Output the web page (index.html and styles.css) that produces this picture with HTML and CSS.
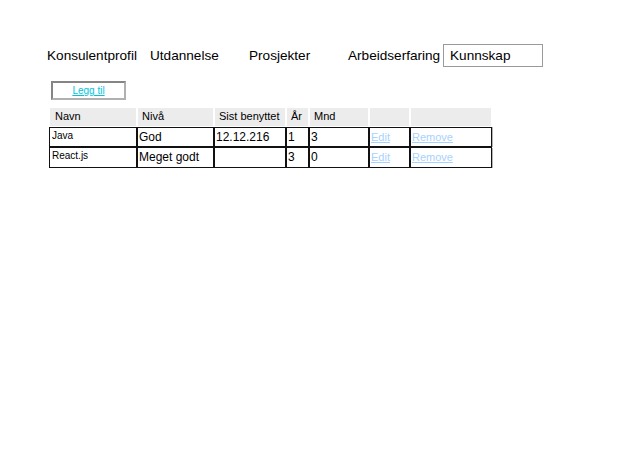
FILE: index.html
```html
<!DOCTYPE html>
<html lang="no">
<head>
<meta charset="utf-8">
<title>Kunnskap</title>
<link rel="stylesheet" href="styles.css">
</head>
<body>
<nav class="tabs">
  <span class="tab tab-1">Konsulentprofil</span>
  <span class="tab tab-2">Utdannelse</span>
  <span class="tab tab-3">Prosjekter</span>
  <span class="tab tab-4">Arbeidserfaring</span>
  <span class="tab tab-active">Kunnskap</span>
</nav>
<div class="actions">
  <a class="add-btn" href="#">Legg til</a>
</div>
<table class="grid">
  <thead>
    <tr>
      <th class="c-name">Navn</th>
      <th class="c-level">Nivå</th>
      <th class="c-date">Sist benyttet</th>
      <th class="c-year">År</th>
      <th class="c-month">Mnd</th>
      <th class="c-edit"></th>
      <th class="c-remove"></th>
    </tr>
  </thead>
  <tbody>
    <tr>
      <td class="name">Java</td>
      <td>God</td>
      <td>12.12.216</td>
      <td>1</td>
      <td>3</td>
      <td><a class="link" href="#">Edit</a></td>
      <td><a class="link" href="#">Remove</a></td>
    </tr>
    <tr class="last">
      <td class="name">React.js</td>
      <td>Meget godt</td>
      <td></td>
      <td>3</td>
      <td>0</td>
      <td><a class="link" href="#">Edit</a></td>
      <td><a class="link" href="#">Remove</a></td>
    </tr>
  </tbody>
</table>
</body>
</html>
```

FILE: styles.css
```css
html, body {
  margin: 0;
  padding: 0;
  background: #fff;
}

body {
  font-family: "Liberation Sans", Arial, sans-serif;
  color: #000;
}

.tabs {
  display: flex;
  align-items: center;
  padding: 44px 0 0 47px;
  font-size: 13.6px;
}

.tab {
  display: block;
  line-height: 21px;
  white-space: nowrap;
}

.tab-1 { width: 103px; }
.tab-2 { width: 99px; }
.tab-3 { width: 99px; }
.tab-4 { width: 95px; }

.tab-active {
  box-sizing: border-box;
  width: 100px;
  height: 23px;
  border: 1px solid #9a9a9a;
  padding-left: 6px;
}

.actions {
  padding: 14px 0 0 51px;
}

.add-btn {
  display: block;
  box-sizing: border-box;
  width: 75px;
  height: 19px;
  border: 2px solid #8c8c8c;
  border-color: #858585 #b0b0b0 #b0b0b0 #858585;
  text-align: center;
  font-size: 10px;
  line-height: 15px;
  color: #00c3dc;
  text-decoration: underline;
}

.grid {
  margin: 7px 0 0 49px;
  border-collapse: separate;
  border-spacing: 0;
  table-layout: fixed;
}

.grid th,
.grid td {
  box-sizing: border-box;
  padding: 0;
  text-align: left;
  vertical-align: top;
}

.grid th {
  height: 20px;
  border: 1px solid #fff;
  background: #ececec;
  font-weight: normal;
  font-size: 11px;
  line-height: 16px;
  padding-left: 4px;
}

.grid th.c-name { padding-left: 5px; }

.c-name { width: 88px; }
.c-level { width: 77px; }
.c-date { width: 72px; }
.c-year { width: 23px; }
.c-month { width: 60px; }
.c-edit { width: 41px; }
.c-remove { width: 82px; }

.grid td {
  height: 20px;
  border: 1px solid #111;
  font-size: 12px;
  line-height: 16px;
  padding: 1px 0 0 1px;
}

.grid td.name {
  font-size: 10px;
  line-height: 14px;
  padding-left: 2px;
}

.grid tbody td:last-child {
  box-shadow: 1px 0 0 #b4b4b4;
}

.grid tbody tr.last td {
  height: 21px;
  box-shadow: 0 1px 0 #b4b4b4;
}

.grid tbody tr.last td:last-child {
  box-shadow: 1px 1px 0 #b4b4b4;
}

.link {
  font-size: 11px;
  color: #a6d2ff;
  text-decoration: underline;
}
```
